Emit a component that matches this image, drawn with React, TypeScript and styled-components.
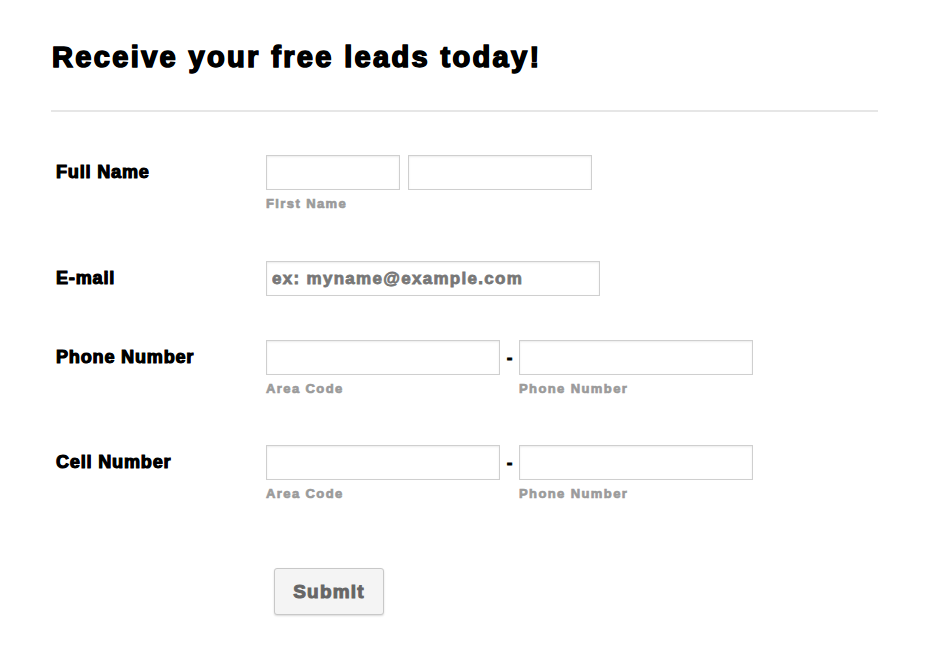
import styled, { createGlobalStyle } from 'styled-components';

const GlobalStyle = createGlobalStyle`
  body {
    margin: 0;
    background: #fff;
    font-family: "Liberation Sans", Arial, sans-serif;
  }
`;

const Page = styled.div`
  width: 930px;
  height: 650px;
  padding: 39px 0 0 52px;
  box-sizing: border-box;
`;

const Title = styled.h1`
  margin: 0;
  font-size: 29px;
  line-height: 36px;
  font-weight: 700;
  letter-spacing: 2.35px;
  color: #000;
  -webkit-text-stroke: 1.4px #000;
  text-shadow: 0.4px 0 0 #000, -0.4px 0 0 #000;
`;

const Divider = styled.hr`
  width: 827px;
  margin: 35px 0 0 -1px;
  border: 0;
  border-top: 2px solid #e6e6e6;
`;

const Form = styled.form`
  display: flex;
  flex-direction: column;
  gap: 46px;
  margin-top: 43px;
`;

const Row = styled.div<{ $shift?: number }>`
  display: flex;
  align-items: flex-start;
  margin-top: ${({ $shift }) => $shift ?? 0}px;
`;

const Label = styled.label`
  width: 210px;
  padding: 6px 0 0 4px;
  font-size: 18px;
  line-height: 22px;
  font-weight: 700;
  letter-spacing: 0.85px;
  color: #000;
  -webkit-text-stroke: 1px #000;
  text-shadow: 0.3px 0 0 #000;
`;

const Fields = styled.div`
  display: flex;
  align-items: flex-start;
  gap: 8px;
`;

const Field = styled.div`
  display: flex;
  flex-direction: column;
`;

const Input = styled.input<{ w: number }>`
  width: ${({ w }) => w}px;
  height: 35px;
  box-sizing: border-box;
  margin: 0;
  padding: 0 5px;
  border: 1px solid #cfcfcf;
  box-shadow: inset 0 1px 2px rgba(0, 0, 0, 0.08);
  background: #fff;
  font-family: "Liberation Sans", Arial, sans-serif;
  font-size: 17px;
  font-weight: 700;
  letter-spacing: 1.3px;
  color: #333;
  outline: none;

  &::placeholder {
    color: #777;
    -webkit-text-stroke: 0.8px #777;
  }
`;

const Sub = styled.span`
  margin-top: 4px;
  font-size: 13px;
  line-height: 20px;
  font-weight: 700;
  letter-spacing: 1.4px;
  color: #9b9b9b;
  -webkit-text-stroke: 0.7px #9b9b9b;
`;

const Dash = styled.span`
  width: 3px;
  height: 35px;
  display: flex;
  align-items: center;
  justify-content: center;
  font-size: 17px;
  font-weight: 700;
  color: #000;
  -webkit-text-stroke: 0.8px #000;
`;

const SubmitRow = styled.div`
  margin: 64px 0 0 222px;
`;

const SubmitButton = styled.button`
  width: 110px;
  height: 47px;
  box-sizing: border-box;
  border: 1px solid #c8c8c8;
  border-radius: 3px;
  background: #f4f4f4;
  box-shadow: 0 1px 2px rgba(0, 0, 0, 0.15);
  font-family: "Liberation Sans", Arial, sans-serif;
  font-size: 19px;
  font-weight: 700;
  letter-spacing: 1.2px;
  color: #666;
  -webkit-text-stroke: 1px #666;
  cursor: pointer;
`;

const PhoneRow = ({ label, shift }: { label: string; shift?: number }) => (
  <Row $shift={shift}>
    <Label>{label}</Label>
    <Fields>
      <Field>
        <Input w={234} type="tel" />
        <Sub>Area Code</Sub>
      </Field>
      <Dash>-</Dash>
      <Field>
        <Input w={234} type="tel" />
        <Sub>Phone Number</Sub>
      </Field>
    </Fields>
  </Row>
);

export default function App() {
  return (
    <>
      <GlobalStyle />
      <Page>
        <Title>Receive your free leads today!</Title>
        <Divider />
        <Form onSubmit={(e) => e.preventDefault()}>
          <Row>
            <Label>Full Name</Label>
            <Fields>
              <Field>
                <Input w={134} />
                <Sub>First Name</Sub>
              </Field>
              <Field>
                <Input w={184} />
              </Field>
            </Fields>
          </Row>
          <Row $shift={1}>
            <Label>E-mail</Label>
            <Input w={334} type="email" placeholder="ex: myname@example.com" />
          </Row>
          <PhoneRow label="Phone Number" shift={-2} />
          <PhoneRow label="Cell Number" />
        </Form>
        <SubmitRow>
          <SubmitButton type="submit">Submit</SubmitButton>
        </SubmitRow>
      </Page>
    </>
  );
}
